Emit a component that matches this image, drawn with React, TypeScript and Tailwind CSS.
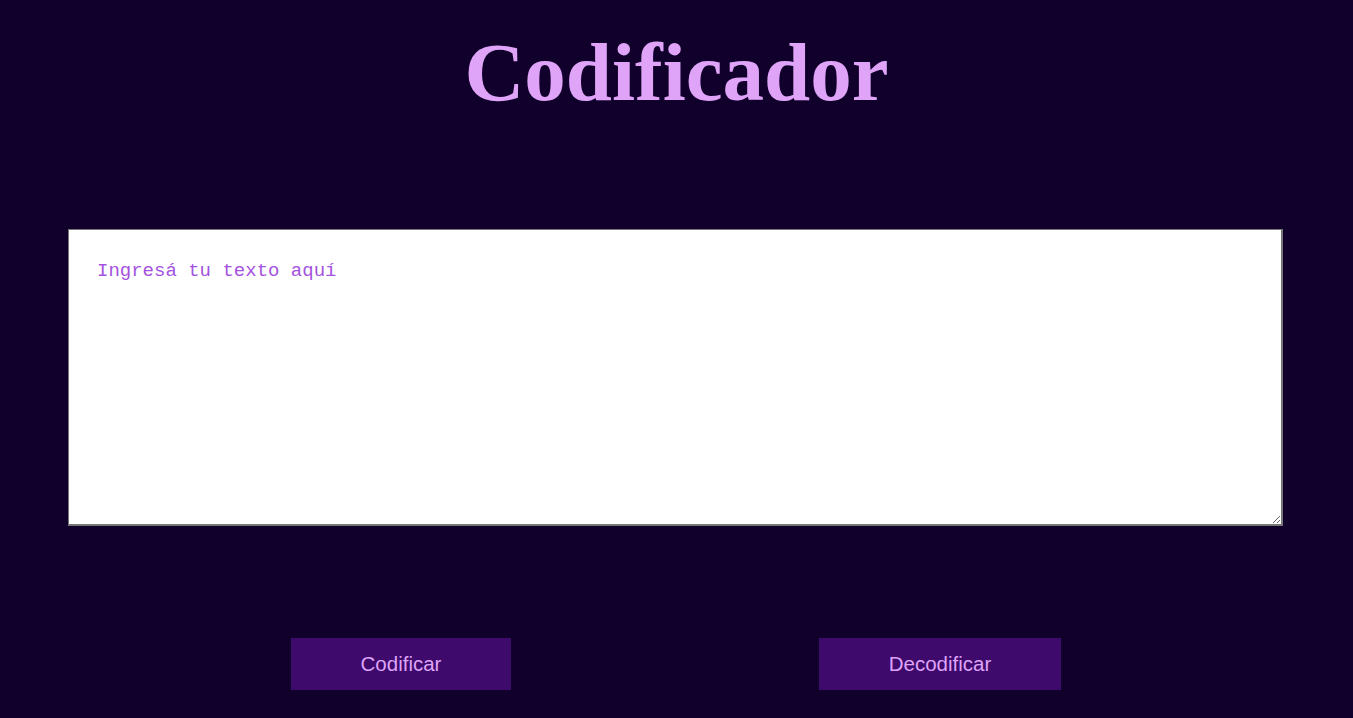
export default function App() {
  return (
    <div className="min-h-[718px] w-full bg-[#11002b] flex flex-col overflow-hidden">
      <h1 className="mt-[24px] text-center font-['Liberation_Serif','Times_New_Roman',serif] text-[83px] font-bold leading-[96px] text-[#dfa3f8]">
        Codificador
      </h1>
      <div className="mt-[109px] flex pl-[68px]">
        <textarea
          placeholder="Ingresá tu texto aquí"
          className="h-[297px] w-[1215px] resize-y border-l border-t border-r-2 border-b-2 border-[#767676] bg-white px-[28px] pt-[27px] pb-[28px] font-['Liberation_Mono','DejaVu_Sans_Mono',monospace] text-[19px] text-[#a452e0] placeholder:text-[#a452e0] outline-none"
        />
      </div>
      <div className="mt-[112px] flex pl-[291px] gap-[308px]">
        <button className="h-[52px] w-[220px] bg-[#3e0a6c] font-['Liberation_Sans',Arial,sans-serif] text-[20.5px] text-[#dfa3f8]">
          Codificar
        </button>
        <button className="h-[52px] w-[242px] bg-[#3e0a6c] font-['Liberation_Sans',Arial,sans-serif] text-[20.5px] text-[#dfa3f8]">
          Decodificar
        </button>
      </div>
    </div>
  );
}
